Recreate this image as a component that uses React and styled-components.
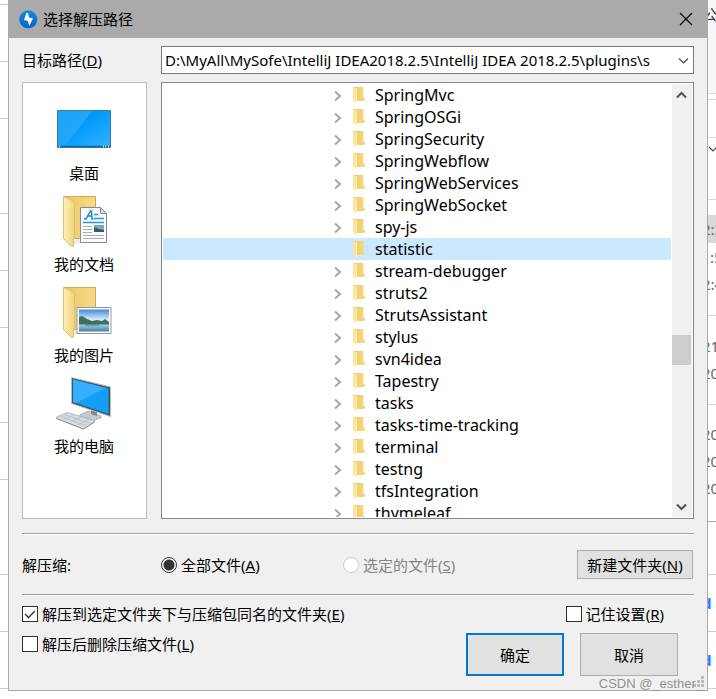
import React from "react";
import styled, { createGlobalStyle, css } from "styled-components";

const GlobalStyle = createGlobalStyle`
  * { box-sizing: border-box; }
  body {
    margin: 0;
    background: #fff;
    color: #000;
    font: 15px/22px "Noto Sans", "Noto Sans CJK SC", sans-serif;
  }
  button, input, select { font: inherit; color: inherit; }
`;

const Desktop = styled.div`
  display: grid;
  grid-template-columns: 8px minmax(0, 1fr) 8px;
  align-items: start;
  min-height: 100vh;
  overflow: hidden;
`;

const Strip = styled.div`
  overflow: hidden;
`;

const StripRow = styled.div`
  display: flex;
  align-items: center;
  justify-content: flex-start;
  height: ${(p) => p.$h}px;
  overflow: hidden;
  background: ${(p) => p.$bg || "#fff"};
  border-bottom: ${(p) => (p.$line ? `1px solid ${p.$line}` : "0")};
  color: ${(p) => p.$color || "#666"};
  font-weight: ${(p) => (p.$bold ? 700 : 400)};
  white-space: nowrap;
`;

const StripText = styled.span`
  margin-left: ${(p) => (p.$aligned ? "2px" : "-6px")};
`;

const Dialog = styled.main`
  position: relative;
  background: #f0f0f0;
  border: 1px solid #aaa;
  border-top: 0;
`;

const TitleBar = styled.header`
  display: flex;
  align-items: center;
  gap: 5px;
  height: 38px;
  padding: 0 14px 0 10px;
  background: #aaa;
`;

const Title = styled.h1`
  flex: 1;
  margin: 0;
  font-size: 15px;
  font-weight: 400;
`;

const CloseButton = styled.button`
  display: flex;
  padding: 0;
  border: 0;
  background: none;
`;

const Body = styled.div`
  padding: 8px 13px 14px;
`;

const Picker = styled.div`
  display: grid;
  grid-template-columns: 125px minmax(0, 1fr);
  gap: 8px 14px;
`;

const PathLabel = styled.label`
  align-self: center;
`;

const Combo = styled.div`
  position: relative;
  svg {
    position: absolute;
    right: 5px;
    top: 11px;
    pointer-events: none;
  }
`;

const PathSelect = styled.select`
  display: block;
  appearance: none;
  width: 100%;
  height: 28px;
  padding: 0 22px 0 3px;
  border: 1px solid #7a7a7a;
  border-radius: 0;
  background: #fff;
`;

const Places = styled.nav`
  display: flex;
  flex-direction: column;
  align-items: center;
  gap: 10px;
  padding: 20px 1px 0 0;
  border: 1px solid #bdbdbd;
  background: #fff;
`;

const Place = styled.button`
  display: flex;
  flex-direction: column;
  align-items: center;
  gap: 3px;
  padding: 0;
  border: 0;
  background: none;
`;

const TreePanel = styled.div`
  display: flex;
  height: 437px;
  padding: 1px;
  border: 1px solid #828790;
  background: #fff;
`;

const Tree = styled.ul`
  flex: 1;
  margin: 0;
  padding: 0;
  overflow: hidden;
  font-size: 16px;
  list-style: none;
`;

const TreeRow = styled.li`
  display: grid;
  grid-template-columns: 10px 14px 1fr;
  gap: 9px;
  align-items: center;
  height: 22px;
  padding-left: 170px;
  background: ${(p) => (p.$selected ? "#cce8ff" : "transparent")};
`;

const Expander = styled.button`
  display: flex;
  grid-column: 1;
  padding: 2px 0 0;
  border: 0;
  background: none;
`;

const FolderCell = styled.span`
  display: flex;
  grid-column: 2;
`;

const ScrollBar = styled.div`
  display: flex;
  flex-direction: column;
  width: 20px;
  margin-left: 1px;
  background: #f0f0f0;
`;

const ScrollButton = styled.button`
  display: flex;
  align-items: center;
  justify-content: center;
  height: 21px;
  padding: 0 1px 0 0;
  border: 0;
  background: none;
`;

const ScrollTrack = styled.div`
  display: flex;
  flex: 1;
  flex-direction: column;
`;

const ScrollSpace = styled.div`
  flex: ${(p) => p.$share};
`;

const ScrollThumb = styled.div`
  height: 30px;
  margin-right: 1px;
  background: #cdcdcd;
`;

const Divider = styled.hr`
  height: 2px;
  margin: ${(p) => (p.$spaced ? "14px" : "0")} 0 0;
  border: 0;
  border-top: 1px solid #a0a0a0;
  border-bottom: 1px solid #fff;
`;

const Options = styled.fieldset`
  display: grid;
  grid-template-columns: 125px 168px minmax(0, 1fr) auto;
  column-gap: 14px;
  align-items: center;
  min-width: 0;
  margin: 0;
  padding: 15px 1px 15px 0;
  border: 0;
`;

const Choice = styled.label`
  display: flex;
  align-items: center;
  gap: 4px;
  color: ${(p) => (p.$muted ? "#838383" : "#000")};
`;

const boxBase = css`
  appearance: none;
  flex: none;
  width: 16px;
  height: 16px;
  margin: 0;
  border: 1px solid #333;
  background: #fff;
`;

const Radio = styled.input`
  ${boxBase}
  border-radius: 50%;
  &:checked { background: radial-gradient(circle, #333 5px, #fff 6px); }
  &:disabled { border-color: #ccc; }
`;

const Check = styled.input`
  ${boxBase}
  &:checked {
    background: #fff url("data:image/svg+xml,%3Csvg xmlns='http://www.w3.org/2000/svg' viewBox='0 0 14 14'%3E%3Cpath d='M2 7l3.5 3.5L12 4' fill='none' stroke='%23333' stroke-width='1.4'/%3E%3C/svg%3E");
  }
`;

const Button = styled.button`
  padding: 0;
  border: ${(p) => (p.$primary ? "2px solid #0078d7" : "1px solid #adadad")};
  border-radius: 0;
  background: #e1e1e1;
  width: ${(p) => (p.$large ? 98 : 116)}px;
  height: ${(p) => (p.$large ? 43 : 29)}px;
`;

const Footer = styled.div`
  display: flex;
  justify-content: space-between;
  padding: 7px 16px 0 0;
`;

const Checks = styled.div`
  display: flex;
  flex-direction: column;
  gap: 8px;
`;

const Actions = styled.div`
  display: flex;
  flex-direction: column;
  gap: 8px;
`;

const Remember = styled(Choice)`
  align-self: flex-end;
  margin-right: 14px;
`;

const ActionButtons = styled.div`
  display: flex;
  gap: 16px;
`;

const Watermark = styled.span`
  position: absolute;
  right: 4px;
  bottom: -2px;
  color: #909090;
  font: 13px/16px "Liberation Sans", sans-serif;
`;

const Grip = styled.svg`
  position: absolute;
  right: 3px;
  bottom: 2px;
`;

const Key = ({ children }) => <>(<u>{children}</u>)</>;

const AppLogo = () => (
  <svg width="19" height="19" viewBox="0 0 19 19" aria-hidden="true">
    <defs>
      <linearGradient id="logo" x2="0" y2="1">
        <stop offset="0" stopColor="#1688e8" />
        <stop offset="1" stopColor="#0563c4" />
      </linearGradient>
    </defs>
    <circle cx="9.3" cy="9.3" r="9" fill="url(#logo)" />
    <path d="M7.6 2.8L5 10l3.8 1 1.4 5L14 8.4l-4-1L9 2.9z" fill="#fff" />
  </svg>
);

const Cross = () => (
  <svg width="14" height="14" viewBox="0 0 14 14" aria-hidden="true">
    <path d="M1 1l12 12M13 1L1 13" stroke="#000" strokeWidth="1.1" />
  </svg>
);

const Chevron = ({ w, h, d, color, weight }) => (
  <svg width={w} height={h} viewBox={`0 0 ${w} ${h}`} aria-hidden="true">
    <path d={d} fill="none" stroke={color} strokeWidth={weight} />
  </svg>
);

const SmallFolder = () => (
  <svg width="14" height="18" viewBox="0 0 14 18" aria-hidden="true">
    <path d="M1 1h10.5v10.5l1.5 1V15H4z" fill="url(#folderBack)" />
    <path d="M1 1l4 1.5V17l-1.5-.5L1 14z" fill="#fbe49c" />
    <path d="M4.5 2.5v14" stroke="#fff0bd" />
  </svg>
);

const BigFolder = () => (
  <>
    <path d="M12 51l8-6h8v4z" fill="#eee" />
    <path d="M7.5 2.5h32v42h-28z" fill="url(#folderBack)" stroke="#c9ac58" />
    <path d="M7.5 2.5l10 4.5 1 1.5V43h-1v9l-2 .5-8-8z" fill="url(#folderFront)" stroke="#d8c276" />
  </>
);

const DesktopIcon = () => (
  <svg width="56" height="56" viewBox="0 0 56 56" aria-hidden="true">
    <path d="M1.5 7.5h53v37h-53z" fill="url(#screenDark)" stroke="#367da3" />
    <path d="M2 8h34L10 42H2z" fill="url(#screenLight)" />
    <path d="M2 43.5h52" stroke="#12679c" strokeWidth="1.4" />
    <path d="M3 43.5h1M47 43.5h1M49 43.5h1M52 43.5h1" stroke="#fff" strokeWidth="1.4" />
  </svg>
);

const DocumentsIcon = () => (
  <svg width="56" height="56" viewBox="0 0 56 56" aria-hidden="true">
    <BigFolder />
    <path d="M24.5 13.5h20l6 6v29h-26z" fill="#fafafa" stroke="#858a8e" />
    <path d="M44.5 13.5v6h6z" fill="#ddd" stroke="#858a8e" />
    <path d="M28 25h2l4.5-8h1l.5 8h1.5M31 22h5" fill="none" stroke="#1e88ce" strokeWidth="1.5" />
    <path d="M38 20.5h4M38 24.5h10M27 28.5h21" stroke="#2999db" strokeWidth="1.4" />
    <path d="M27 32.5h9M27 35.5h9M27 38.5h9M27 41.5h21M27 44.5h21" stroke="#a9adb0" />
    <path d="M38 31h10v7H38z" fill="#7aa6d8" />
    <path d="M38 33l5 2 5 1v2H38z" fill="#365f55" />
  </svg>
);

const PicturesIcon = () => (
  <svg width="56" height="56" viewBox="0 0 56 56" aria-hidden="true">
    <BigFolder />
    <path d="M21 22.5h34v26H21z" fill="#fff" stroke="#8e989f" />
    <path d="M23 24.5h30v22H23z" fill="url(#sky)" />
    <path d="M23 32l3-1 5 3 5 2 5-1 5 1 3-2 4 3v4H23z" fill="#39705e" />
    <path d="M23 39.5h30v7H23z" fill="url(#lake)" />
    <path d="M29 40h14" stroke="#477b75" />
  </svg>
);

const ComputerIcon = () => (
  <svg width="56" height="56" viewBox="0 0 56 56" aria-hidden="true">
    <path d="M24 38.5l9-3.5 12 5v2l-11 3.5-10-4.5z" fill="#c4cacf" stroke="#8f999f" strokeWidth=".6" />
    <path d="M35 32l6 2v6l-6-2z" fill="#7c8991" />
    <path d="M15.5 1.5l39 9.5v29.5l-39-13z" fill="#43545e" stroke="#b5bdc2" />
    <path d="M17 3.6l35.5 9V38L17 26z" fill="#119ff7" />
    <path d="M17 3.6l33 8.4-30 15-3-1z" fill="#36aefb" />
    <path d="M.5 41l11-4.5 27 8v1.5l-11 7-27-10.5z" fill="#d9dde0" stroke="#a3abb1" strokeWidth=".8" />
    <path d="M4 40l27 10M8 38.5l27 9M8 43.5l10-5M15 46l11-5.5M22 49l11-6" stroke="#b3babf" strokeWidth=".8" />
    <path d="M.5 42.5l27 10.5 11-7" fill="none" stroke="#8c969d" />
  </svg>
);

const Gradients = styled.svg`
  position: absolute;
`;

const SharedGradients = () => (
  <Gradients width="0" height="0" aria-hidden="true">
    <defs>
      <linearGradient id="folderBack">
        <stop offset="0" stopColor="#e9c866" />
        <stop offset="1" stopColor="#f8da83" />
      </linearGradient>
      <linearGradient id="folderFront">
        <stop offset="0" stopColor="#fff0b8" />
        <stop offset="1" stopColor="#f3d279" />
      </linearGradient>
      <linearGradient id="sky" x2="0" y2="1">
        <stop offset="0" stopColor="#4288db" />
        <stop offset="0.5" stopColor="#e4f3fb" />
      </linearGradient>
      <linearGradient id="lake" x2="0" y2="1">
        <stop offset="0" stopColor="#a9cfe0" />
        <stop offset="1" stopColor="#447fa5" />
      </linearGradient>
      <linearGradient id="screenDark" x2="1" y2="1">
        <stop offset="0.4" stopColor="#0099fb" />
        <stop offset="1" stopColor="#35b2ff" />
      </linearGradient>
      <linearGradient id="screenLight" x2="1" y2="1">
        <stop offset="0" stopColor="#1ca3fb" />
        <stop offset="0.6" stopColor="#20a8fb" />
      </linearGradient>
    </defs>
  </Gradients>
);

const places = [
  ["桌面", DesktopIcon],
  ["我的文档", DocumentsIcon],
  ["我的图片", PicturesIcon],
  ["我的电脑", ComputerIcon],
];

const folders = [
  "SpringMvc", "SpringOSGi", "SpringSecurity", "SpringWebflow", "SpringWebServices",
  "SpringWebSocket", "spy-js", "statistic", "stream-debugger", "struts2",
  "StrutsAssistant", "stylus", "svn4idea", "Tapestry", "tasks",
  "tasks-time-tracking", "terminal", "testng", "tfsIntegration", "thymeleaf",
];

const leftRows = [5, 57, 57, 95, 57, 57, 95, 57, 95, 57, 57];

const rightRows = [
  { h: 28, bg: "#f5f6f7", text: "公告", color: "#333" },
  { h: 66, bg: "#f5f6f7", line: "#ddd" },
  { h: 6, line: "#ddd" },
  { h: 38, line: "#ddd" },
  { h: 22, chevron: true },
  { h: 40, line: "#ddd" },
  { h: 15 },
  { h: 28, bg: "#d9d9d9", text: "2:3" },
  { h: 27, text: ":5", aligned: true },
  { h: 27, text: "2:4" },
  { h: 19, line: "#ddd" },
  { h: 16 },
  { h: 27, text: "21" },
  { h: 27, text: "20" },
  { h: 19, line: "#ddd" },
  { h: 15 },
  { h: 27, text: "20" },
  { h: 27, text: "20" },
  { h: 27, text: "20" },
  { h: 21, line: "#aaa" },
  { h: 53, line: "#ccc" },
  { h: 57, line: "#ccc", text: "d", color: "#1a7dff", bold: true },
  { h: 57, line: "#ccc", text: "d", color: "#1a7dff", bold: true },
];

export default function App() {
  return (
    <Desktop>
      <GlobalStyle />
      <Strip>
        {leftRows.map((h, i) => <StripRow key={i} $h={h} $line="#ccc" />)}
      </Strip>
      <Dialog>
        <SharedGradients />
        <TitleBar>
          <AppLogo />
          <Title>选择解压路径</Title>
          <CloseButton aria-label="关闭"><Cross /></CloseButton>
        </TitleBar>
        <Body>
          <Picker>
            <PathLabel htmlFor="path">目标路径<Key>D</Key></PathLabel>
            <Combo>
              <PathSelect id="path">
                <option>{"D:\\MyAll\\MySofe\\IntelliJ IDEA2018.2.5\\IntelliJ IDEA 2018.2.5\\plugins\\s"}</option>
              </PathSelect>
              <Chevron w={11} h={8} d="M1 1.5l4.5 4.5L10 1.5" color="#444" weight={1.1} />
            </Combo>
            <Places>
              {places.map(([name, Icon]) => (
                <Place key={name}><Icon />{name}</Place>
              ))}
            </Places>
            <TreePanel>
              <Tree>
                {folders.map((name) => (
                  <TreeRow key={name} $selected={name === "statistic"}>
                    {name !== "statistic" && (
                      <Expander aria-label={`展开 ${name}`}>
                        <Chevron w={10} h={12} d="M2 1.5L7 6l-5 4.5" color="#a6a6a6" weight={2} />
                      </Expander>
                    )}
                    <FolderCell><SmallFolder /></FolderCell>
                    {name}
                  </TreeRow>
                ))}
              </Tree>
              <ScrollBar>
                <ScrollButton aria-label="向上滚动">
                  <Chevron w={11} h={8} d="M1 6.5L5.5 2L10 6.5" color="#505050" weight={2} />
                </ScrollButton>
                <ScrollTrack>
                  <ScrollSpace $share={230} />
                  <ScrollThumb />
                  <ScrollSpace $share={131} />
                </ScrollTrack>
                <ScrollButton aria-label="向下滚动">
                  <Chevron w={11} h={8} d="M1 1.5L5.5 6L10 1.5" color="#505050" weight={2} />
                </ScrollButton>
              </ScrollBar>
            </TreePanel>
          </Picker>
          <Divider $spaced />
          <Options>
            <span>解压缩:</span>
            <Choice><Radio type="radio" name="scope" defaultChecked />
              <span>全部文件<Key>A</Key></span></Choice>
            <Choice $muted><Radio type="radio" name="scope" disabled />
              <span>选定的文件<Key>S</Key></span></Choice>
            <Button>新建文件夹<Key>N</Key></Button>
          </Options>
          <Divider />
          <Footer>
            <Checks>
              <Choice><Check type="checkbox" defaultChecked />
                <span>解压到选定文件夹下与压缩包同名的文件夹<Key>E</Key></span></Choice>
              <Choice><Check type="checkbox" />
                <span>解压后删除压缩文件<Key>L</Key></span></Choice>
            </Checks>
            <Actions>
              <Remember><Check type="checkbox" />
                <span>记住设置<Key>R</Key></span></Remember>
              <ActionButtons>
                <Button $large $primary>确定</Button>
                <Button $large>取消</Button>
              </ActionButtons>
            </Actions>
          </Footer>
        </Body>
        <Grip width="12" height="12" viewBox="0 0 12 12" aria-hidden="true">
          <path d="M9 0h3v3H9zM9 4h3v3H9zM5 4h3v3H5zM9 8h3v3H9zM5 8h3v3H5zM1 8h3v3H1z" fill="#bbb" />
        </Grip>
        <Watermark>CSDN @_esther_</Watermark>
      </Dialog>
      <Strip>
        {rightRows.map((r, i) => (
          <StripRow key={i} $h={r.h} $bg={r.bg} $line={r.line} $color={r.color} $bold={r.bold}>
            {r.text && <StripText $aligned={r.aligned}>{r.text}</StripText>}
            {r.chevron && <Chevron w={8} h={8} d="M1 2l4 4 4-4" color="#444" weight={1.1} />}
          </StripRow>
        ))}
      </Strip>
    </Desktop>
  );
}
